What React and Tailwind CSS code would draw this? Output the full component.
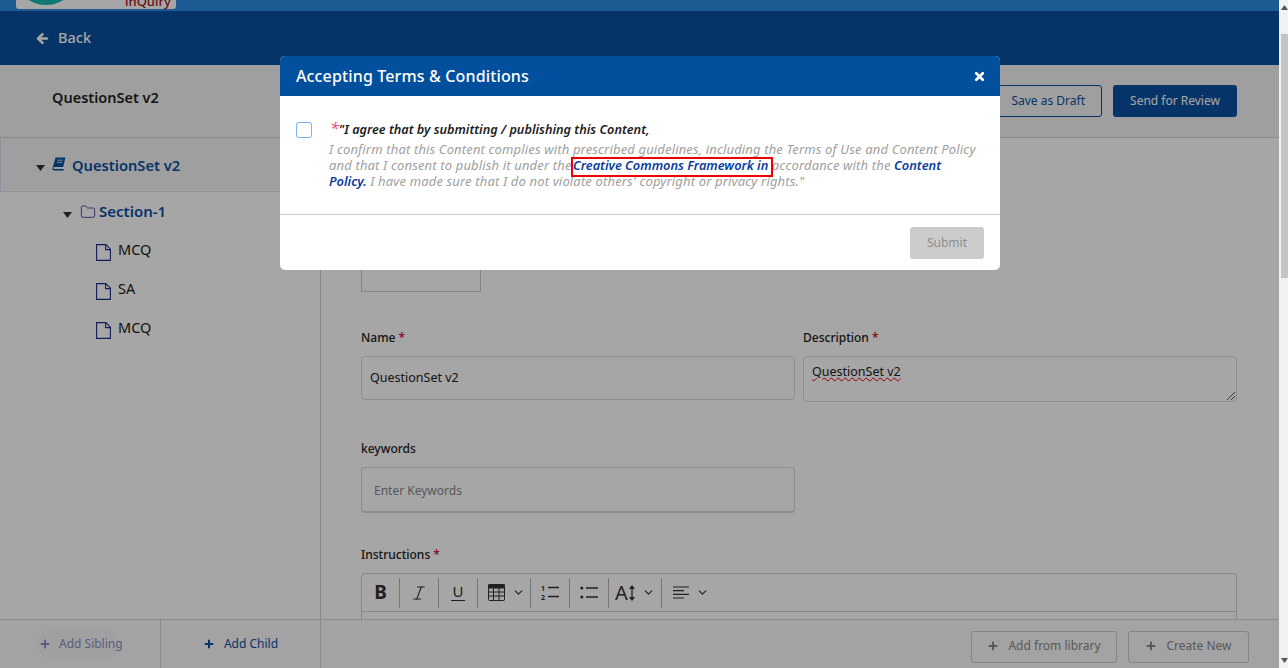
import { ArrowLeft, Plus, X, Folder, Italic, ChevronDown } from 'lucide-react';

function Caret() {
  return (
    <svg width="9" height="6" viewBox="0 0 9 6" className="shrink-0 translate-y-[3px]">
      <path d="M0 0h9L4.5 6z" fill="#333" />
    </svg>
  );
}

function BookIcon() {
  return (
    <svg width="14" height="14" viewBox="0 0 14 14" className="shrink-0 -translate-y-[1px]">
      <path d="M3.6 .6h9.8l-2.2 9.4H2.4c-.7 0-1 .5-1 1s.4 1 1 1h9.4l-.3 1.4H2.2C.9 13.4.2 12.400.5 11z" fill="#0b50a0" />
      <path d="M5.300 3.200h5.500M4.800 5.400h5.500" stroke="#e8eef8" strokeWidth=".8" />
    </svg>
  );
}

function FileRow({ label }) {
  return (
    <div className="flex items-center h-[39px] pl-[96px] gap-[7px]">
      <svg width="15" height="17" viewBox="0 0 15 17" fill="none" stroke="#1e2a8a" strokeWidth="1.1" className="translate-y-[2px]">
        <path d="M.6.600h9.300l4.500 4.600v11.200H.6z" />
        <path d="M9.600.600v5h4.800" />
      </svg>
      <span className="text-[14.500px] text-[#1a1a1a] -translate-y-[1px]">{label}</span>
    </div>
  );
}

function ToolCell({ width, children }) {
  return (
    <>
      <div className={`${width} flex items-center justify-center gap-[7px] shrink-0`}>{children}</div>
      <span className="w-px h-[30px] bg-[#b5b5b5] shrink-0" />
    </>
  );
}

function Chevron() {
  return <ChevronDown size={13} strokeWidth={2} />;
}

export default function App() {
  return (
    <div className="relative flex h-[668px] overflow-hidden bg-white font-['Noto_Sans',sans-serif]">
      <div className="flex h-full flex-1 min-w-0 flex-col">
        {/* top strip with the logo cut off */}
        <div className="h-[11px] bg-[#2a8ae0] relative shrink-0 overflow-hidden">
          <div className="absolute left-4 top-0 h-[9px] w-40 bg-white rounded-b-[3px] overflow-hidden">
            <div className="absolute -left-[3px] -top-[61px] w-[66px] h-[66px] rounded-full bg-[#17b9b1]" />
            <span className="absolute left-[109px] -top-[7px] text-[13px] leading-4 font-medium text-[#a3141c]">inQuiry</span>
          </div>
        </div>
        <div className="h-[54px] bg-[#0b50a0] flex items-center pl-[35px] gap-[8px] text-white shrink-0">
          <ArrowLeft size={15} strokeWidth={4} />
          <span className="text-[14.500px] font-medium">Back</span>
        </div>
        <div className="h-[73px] bg-[#f5f5f5] border-b border-[#d5d5d5] flex items-center justify-between pl-[52px] pr-[42px] shrink-0">
          <span className="text-[14.500px] font-semibold text-[#222] mb-[7px]">QuestionSet v2</span>
          <div className="flex gap-[11px]">
            <button className="h-8 px-4 rounded-[3px] border border-[#0b50a0] text-xs text-[#0b50a0]">Save as Draft</button>
            <button className="h-8 w-[124px] rounded-[3px] bg-[#0b50a0] text-xs text-white">Send for Review</button>
          </div>
        </div>
        <div className="flex flex-1 min-h-0 overflow-hidden">
          {/* outline tree */}
          <aside className="w-[321px] shrink-0 border-r border-[#d5d5d5] flex flex-col">
            <div className="h-[54px] flex items-center pl-[35px] gap-[7px] pt-px border-l border-b border-[#d9e2f0] bg-[#f5f5f5]">
              <Caret />
              <BookIcon />
              <span className="text-[14.700px] font-semibold text-[#0b50a0] -ml-px">QuestionSet v2</span>
            </div>
            <div className="flex items-center h-[39px] pl-[63px] gap-[8px]">
              <Caret />
              <Folder size={16} strokeWidth={1.2} className="text-[#1e2a8a]" />
              <span className="text-[15px] font-semibold text-[#0b50a0] -ml-[5px]">Section-1</span>
            </div>
            <FileRow label="MCQ" />
            <FileRow label="SA" />
            <FileRow label="MCQ" />
          </aside>
          {/* metadata form */}
          <main className="flex-1 pl-10 pr-[42px] min-w-0">
            <div className="h-[90px]" />
            <div className="w-[120px] h-[64px] border border-[#ccc]" />
            <div className="grid grid-cols-2 gap-2 mt-[38px]">
              <div>
                <label className="block text-xs font-medium text-[#222] mb-[10px]">Name <span className="text-[#d0021b]">*</span></label>
                <div className="h-[44px] border border-[#d9d9d9] rounded flex items-center px-2 text-[12.500px] text-[#222]">QuestionSet v2</div>
              </div>
              <div>
                <label className="block text-xs font-medium text-[#222] mb-[10px]">Description <span className="text-[#d0021b]">*</span></label>
                <div className="relative h-[46px] border border-[#d9d9d9] rounded px-2 pt-[6px] text-[12.500px] text-[#222]">
                  <span className="underline decoration-wavy decoration-1 decoration-[#e00]">QuestionSet v2</span>
                  <svg width="8" height="8" viewBox="0 0 8 8" className="absolute right-px bottom-px" stroke="#333" strokeWidth=".8">
                    <path d="M0 8L8 0M4 8l4-4" />
                  </svg>
                </div>
              </div>
            </div>
            <label className="block text-xs font-medium text-[#222] mt-[39px] mb-[10px]">keywords</label>
            <div className="w-[434px] h-[46px] border border-[#d9d9d9] border-b-2 rounded flex items-center px-3 pt-[2px] text-xs text-[#888]">Enter Keywords</div>
            <label className="block text-xs font-medium text-[#222] mt-[34px] mb-[10px]">Instructions <span className="text-[#d0021b]">*</span></label>
            <div className="border border-[#cfcfcf] rounded-t h-[39px] flex items-center text-[#333]">
              <ToolCell width="w-[37px]"><span className="text-[19px] leading-none font-bold">B</span></ToolCell>
              <ToolCell width="w-[38px]"><Italic size={18} strokeWidth={1.500} /></ToolCell>
              <ToolCell width="w-[38px]">
                <span className="flex flex-col items-center">
                  <span className="text-[15px] leading-[15px]">U</span>
                  <span className="w-[14px] h-[1.500px] bg-[#333] mt-px" />
                </span>
              </ToolCell>
              <ToolCell width="w-[52px] pl-[5px]">
                <svg width="17" height="17" viewBox="0 0 17 17" fill="none" stroke="#333">
                  <rect x=".5" y=".5" width="16" height="16" rx="1" />
                  <path d="M0 2.500h17" strokeWidth="4" />
                  <path d="M0 8h17M0 12h17M5.500 4v13M11 4v13" strokeWidth="1" />
                </svg>
                <Chevron />
              </ToolCell>
              <ToolCell width="w-[38px]">
                <svg width="18" height="17" viewBox="0 0 18 17" fill="#333" stroke="#333">
                  <text x="0" y="6.500" fontSize="7" fontWeight="700" stroke="none">1</text>
                  <text x="0" y="16" fontSize="7" fontWeight="700" stroke="none">2</text>
                  <path d="M7 3.500h11M7 12.500h11" strokeWidth="1.300" />
                </svg>
              </ToolCell>
              <ToolCell width="w-[38px]">
                <svg width="18" height="13" viewBox="0 0 18 13" fill="#333" stroke="#333">
                  <circle cx="1.800" cy="2" r="1.500" stroke="none" />
                  <circle cx="1.800" cy="11" r="1.500" stroke="none" />
                  <path d="M6 2h12M6 11h12" strokeWidth="1.300" />
                </svg>
              </ToolCell>
              <ToolCell width="w-[52px]">
                <span className="flex items-center gap-px">
                  <span className="text-[20px] leading-none">A</span>
                  <svg width="6" height="16" viewBox="0 0 6 16" fill="#333" stroke="#333">
                    <path d="M3 2v12" strokeWidth="1.300" />
                    <path d="M0 4l3-4 3 4zM0 12l3 4 3-4z" stroke="none" />
                  </svg>
                </span>
                <Chevron />
              </ToolCell>
              <div className="w-[52px] pl-[5px] flex items-center justify-center gap-[7px]">
                <svg width="16" height="13" viewBox="0 0 16 13" stroke="#333" strokeWidth="1.200">
                  <path d="M0 1h16M0 4.700h11M0 8.300h16M0 12h11" />
                </svg>
                <Chevron />
              </div>
            </div>
            <div className="h-[60px] border-x border-b border-[#cfcfcf]" />
          </main>
        </div>
        {/* bottom bar */}
        <div className="h-[49px] shrink-0 bg-[#fbfbfb] border-t border-[#d5d5d5] flex">
          <div className="w-[161px] border-r border-[#d5d5d5] flex items-center pl-[37px]">
            <span className="flex items-center gap-[8px] h-8 w-[83px] pl-[2px] rounded-full bg-[#f6f6f6] text-xs text-[#8a8fc0] whitespace-nowrap"><Plus size={12} strokeWidth={4} className="shrink-0" /><span>Add Sibling</span></span>
          </div>
          <div className="w-[160px] border-r border-[#d5d5d5] flex items-center justify-center gap-[9px] text-xs text-[#0b50a0]"><Plus size={12} strokeWidth={4} />Add Child</div>
          <div className="flex-1 flex items-center justify-end gap-[11px] pr-[30px] pt-[5px] text-xs text-[#888]">
            <span className="h-8 w-[146px] pb-[2px] border border-[#ccc] rounded-[3px] flex items-center justify-center gap-[9px]"><Plus size={12} strokeWidth={4} />Add from library</span>
            <span className="h-8 w-[121px] pb-[2px] border border-[#ccc] rounded-[3px] flex items-center justify-center gap-[9px]"><Plus size={12} strokeWidth={4} />Create New</span>
          </div>
        </div>
      </div>

      {/* scrollbar */}
      <div className="w-[9px] shrink-0 h-full bg-[#f1f1f1] flex flex-col items-end">
        <svg width="7" height="5" viewBox="0 0 7 5" className="mt-[5px]"><path d="M0 5h7L3.500 0z" fill="#555" /></svg>
        <div className="h-[244px] w-[7px] mt-[24px] bg-[#c3c3c3]" />
        <svg width="7" height="5" viewBox="0 0 7 5" className="mt-auto mb-[5px]"><path d="M0 0h7L3.500 5z" fill="#555" /></svg>
      </div>

      {/* modal backdrop */}
      <div className="absolute inset-y-0 left-0 right-[9px] bg-black/35" />
      <div className="absolute left-[280px] top-[56px] w-[720px] h-[214px] bg-white rounded-[5px] overflow-hidden flex flex-col">
        <div className="h-10 bg-[#024f9d] flex items-center justify-between pl-4 pr-[14px] text-white shrink-0">
          <h2 className="text-base font-medium tracking-[0.14px]">Accepting Terms &amp; Conditions</h2>
          <X size={13} strokeWidth={5} />
        </div>
        <div className="h-[119px] shrink-0 border-b border-[#cfcfcf] flex pl-4 pt-[26px]">
          <span className="w-4 h-4 mr-[17px] rounded-[3px] border border-[#7ab1f0] shrink-0" />
          <div className="w-[651px] italic text-[13px] leading-4 tracking-[0.15px] text-[#a0a0a0] -mt-[2px]">
            <p className="font-semibold text-[12.700px] tracking-normal text-[#222] mb-[4px]">
              <span className="text-[#ef4a6a] text-base leading-4 font-normal ml-px">*</span>"I agree that by submitting / publishing this Content,
            </p>
            <p>
              I confirm that this Content complies with prescribed guidelines, including the Terms of Use and Content Policy and that I consent to publish it under the{' '}
              <span className="relative -ml-[2px] font-semibold text-[12.800px] tracking-normal text-[#0b3d9d]">
                Creative Commons Framework in
                <span className="absolute -left-[2px] -right-[5px] top-px h-5 border-2 border-[#ee0000]" />
              </span>{' '}
              accordance with the <span className="font-semibold text-[12.800px] tracking-normal text-[#0b3d9d]">Content Policy.</span> I have made sure that I do not violate others' copyright or privacy rights."
            </p>
          </div>
        </div>
        <div className="flex-1 flex items-center justify-end pr-4">
          <button className="h-8 w-[74px] rounded-[3px] bg-[#cccccc] text-xs text-[#8e8e8e]">Submit</button>
        </div>
      </div>
    </div>
  );
}
